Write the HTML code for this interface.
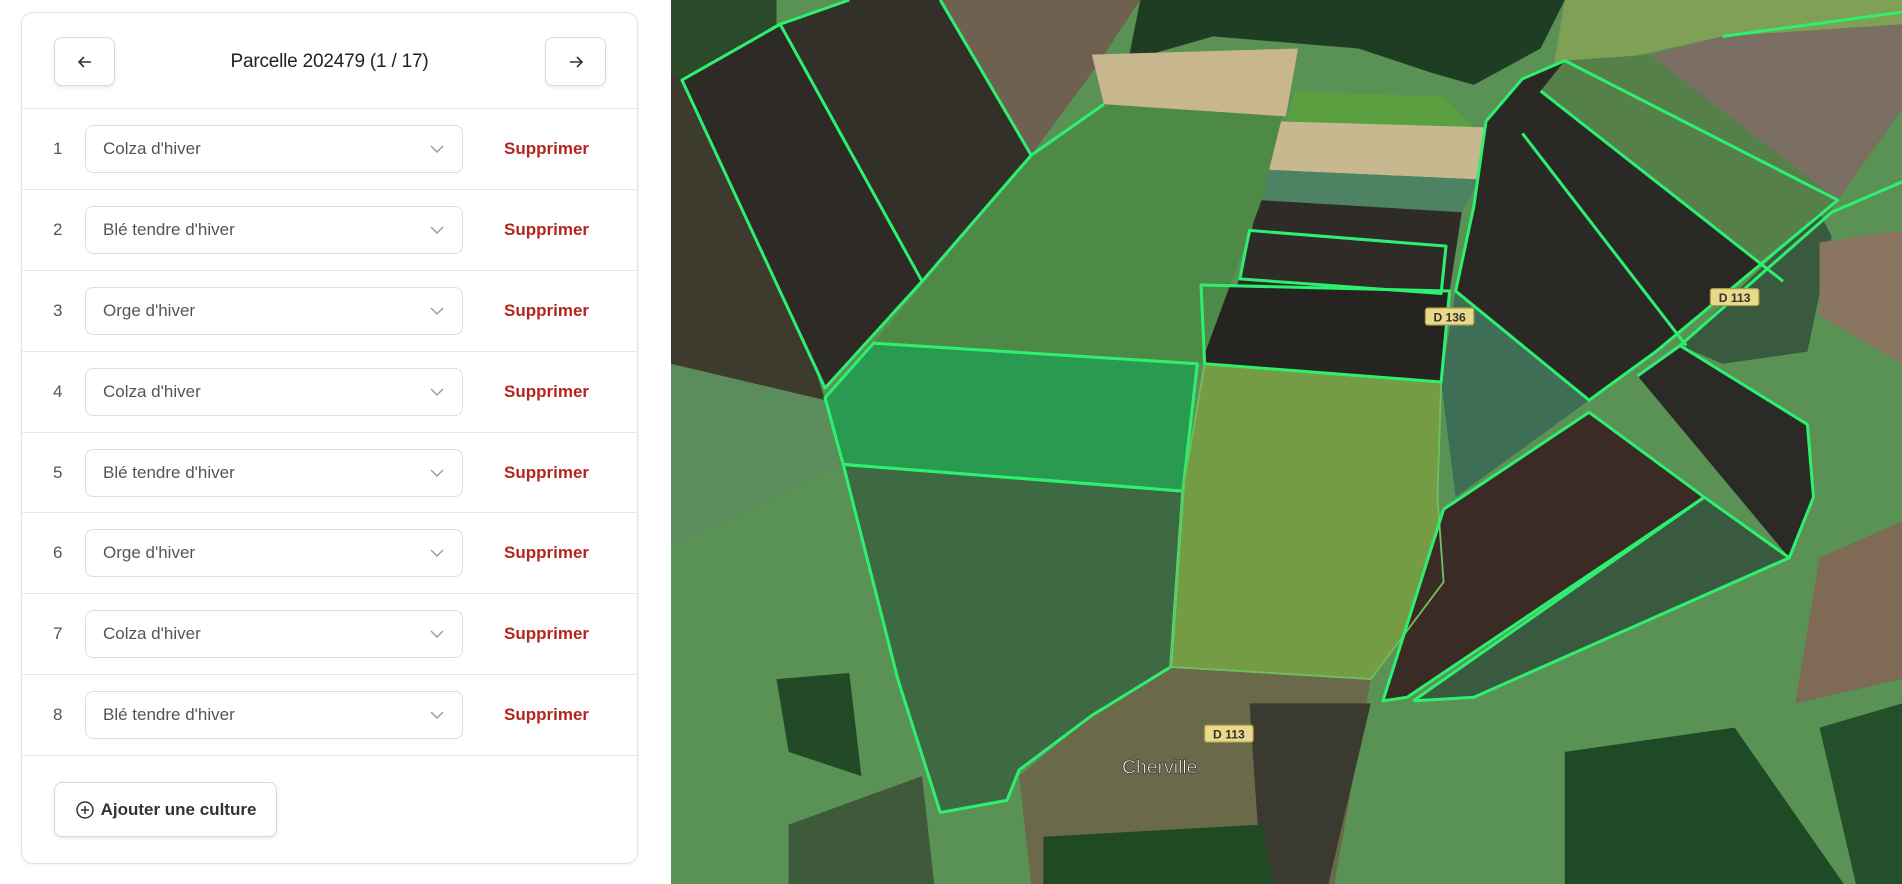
<!DOCTYPE html>
<html><head><meta charset="utf-8"><style>
*{box-sizing:border-box;margin:0;padding:0}
body{width:1902px;height:884px;overflow:hidden;background:#fff;font-family:"Liberation Sans",sans-serif;position:relative}
.card{position:absolute;left:21px;top:12px;width:617px;height:852px;border:1px solid #e3e3e3;border-radius:12px;background:#fff;box-shadow:0 1px 3px rgba(0,0,0,.06)}
.btn{position:absolute;border:1px solid #d9d9d9;border-radius:8px;background:#fff;box-shadow:0 2px 3px rgba(0,0,0,.08);display:flex;align-items:center;justify-content:center;color:#333}
.title{position:absolute;left:0;width:100%;top:38px;text-align:center;font-size:19px;color:#222;letter-spacing:-.2px}
.row{position:absolute;left:0;width:615px;height:81px;border-top:1px solid #e6e6e6}
.num{position:absolute;left:31px;top:30px;font-size:17px;color:#555}
.sel{position:absolute;left:63px;top:16px;width:378px;height:48px;border:1px solid #dedede;border-radius:8px;font-size:17px;color:#555;padding:13px 0 0 17px}
.sel svg{position:absolute;right:18px;top:18px}
.del{position:absolute;left:482px;top:30px;font-size:17px;font-weight:bold;color:#b3261e}
.map{position:absolute;left:671px;top:0;width:1231px;height:884px;background:#558a52}
</style></head><body>
<div class="card">
 <div class="btn" style="left:32px;top:24px;width:61px;height:49px"><svg width="18" height="18" viewBox="0 0 18 18" fill="none" stroke="#333" stroke-width="1.6"><path d="M15 9H3M8 4L3 9l5 5"/></svg></div>
 <div class="title">Parcelle 202479 (1 / 17)</div>
 <div class="btn" style="left:523px;top:24px;width:61px;height:49px"><svg width="18" height="18" viewBox="0 0 18 18" fill="none" stroke="#333" stroke-width="1.6"><path d="M3 9h12M10 4l5 5-5 5"/></svg></div>
 <div class="row" style="top:95px"><span class="num">1</span><div class="sel">Colza d'hiver<svg width="14" height="10" viewBox="0 0 14 10" fill="none" stroke="#999" stroke-width="1.4"><path d="M1 2l6 6 6-6"/></svg></div><span class="del">Supprimer</span></div>
 <div class="row" style="top:176px"><span class="num">2</span><div class="sel">Blé tendre d'hiver<svg width="14" height="10" viewBox="0 0 14 10" fill="none" stroke="#999" stroke-width="1.4"><path d="M1 2l6 6 6-6"/></svg></div><span class="del">Supprimer</span></div>
 <div class="row" style="top:257px"><span class="num">3</span><div class="sel">Orge d'hiver<svg width="14" height="10" viewBox="0 0 14 10" fill="none" stroke="#999" stroke-width="1.4"><path d="M1 2l6 6 6-6"/></svg></div><span class="del">Supprimer</span></div>
 <div class="row" style="top:338px"><span class="num">4</span><div class="sel">Colza d'hiver<svg width="14" height="10" viewBox="0 0 14 10" fill="none" stroke="#999" stroke-width="1.4"><path d="M1 2l6 6 6-6"/></svg></div><span class="del">Supprimer</span></div>
 <div class="row" style="top:419px"><span class="num">5</span><div class="sel">Blé tendre d'hiver<svg width="14" height="10" viewBox="0 0 14 10" fill="none" stroke="#999" stroke-width="1.4"><path d="M1 2l6 6 6-6"/></svg></div><span class="del">Supprimer</span></div>
 <div class="row" style="top:499px"><span class="num">6</span><div class="sel">Orge d'hiver<svg width="14" height="10" viewBox="0 0 14 10" fill="none" stroke="#999" stroke-width="1.4"><path d="M1 2l6 6 6-6"/></svg></div><span class="del">Supprimer</span></div>
 <div class="row" style="top:580px"><span class="num">7</span><div class="sel">Colza d'hiver<svg width="14" height="10" viewBox="0 0 14 10" fill="none" stroke="#999" stroke-width="1.4"><path d="M1 2l6 6 6-6"/></svg></div><span class="del">Supprimer</span></div>
 <div class="row" style="top:661px"><span class="num">8</span><div class="sel">Blé tendre d'hiver<svg width="14" height="10" viewBox="0 0 14 10" fill="none" stroke="#999" stroke-width="1.4"><path d="M1 2l6 6 6-6"/></svg></div><span class="del">Supprimer</span></div>
 <div class="row" style="top:742px;border-top:1px solid #e6e6e6;height:1px"></div>
 <div class="btn" style="left:32px;top:769px;width:223px;height:55px;font-size:17px;font-weight:bold;color:#333;gap:6px"><svg width="20" height="20" viewBox="0 0 20 20" fill="none" stroke="#333" stroke-width="1.5"><circle cx="10" cy="10" r="8"/><path d="M10 6v8M6 10h8"/></svg>Ajouter une culture</div>
</div>
<svg class="map" viewBox="553 0 1015 729" preserveAspectRatio="none">
 <rect x="553" y="0" width="1015" height="729" fill="#5a9154"/>
 <polygon points="553,60 600,70 680,330 640,330 553,300" fill="#3d3a2e"/>
 <polygon points="553,300 680,330 695,383 553,450" fill="#5a8c5c"/>
 <polygon points="940,0 1290,0 1270,40 1215,70 1180,60 1120,40 1000,30 930,50" fill="#1f3d22"/>
 <polygon points="1290,0 1568,0 1568,20 1420,30 1330,50 1280,60" fill="#7ea155"/>
 <polygon points="1420,30 1568,20 1568,90 1515,165 1360,45" fill="#7a6f62"/>
 <polygon points="553,0 640,0 640,20 562,66 553,60" fill="#2a4a2a"/>
 <polygon points="775,0 940,0 900,60 850,128" fill="#6e6150"/>
 <polygon points="900,45 1070,40 1060,96 910,86" fill="#c7b68e"/>
 <polygon points="1068,75 1190,80 1215,105 1060,100" fill="#5aa040"/>
 <polygon points="1050,100 1225,105 1220,148 1045,140" fill="#c8b890"/>
 <polygon points="1045,140 1220,148 1205,175 1040,165" fill="#4d8262"/>
 <polygon points="1038,165 1205,175 1195,240 1020,235" fill="#2f2b26"/>
 <polygon points="990,235 1195,240 1188,315 993,300" fill="#252420"/>
 <polygon points="850,128 910,86 1057,96 1040,165 990,300 720,283" fill="#4d8a48"/>
 <polygon points="562,66 643,20 760,232 680,320" fill="#2e2a26"/>
 <polygon points="643,20 700,0 775,0 850,128 760,232" fill="#33302a"/>
 <polygon points="720,283 987,300 975,405 695,383 680,328" fill="#2a9a50"/>
 <polygon points="695,383 975,405 965,550 900,590 840,635 830,660 775,670 740,560" fill="#3e6a43"/>
 <polygon points="993,300 1188,315 1185,410 1190,480 1130,560 965,550 975,405" fill="#739c45"/>
 <polygon points="1225,100 1255,65 1290,50 1515,165 1365,290 1310,330 1200,240 1215,170" fill="#2b2925"/>
 <polygon points="1290,50 1360,45 1515,165 1470,232 1270,75" fill="#55804a"/>
 <polygon points="1200,240 1310,330 1200,410 1188,315" fill="#3e6e55"/>
 <polygon points="1500,175 1510,195 1490,290 1420,300 1385,285" fill="#3a5a40"/>
 <polygon points="1190,420 1310,340 1405,410 1160,575 1140,578" fill="#3a2c25"/>
 <polygon points="1405,410 1475,460 1215,575 1165,578" fill="#3a5a40"/>
 <polygon points="1350,310 1385,285 1490,350 1495,410 1475,460" fill="#2b2a26"/>
 <polygon points="1500,200 1568,190 1568,300 1500,260" fill="#8a7560"/>
 <polygon points="1500,460 1568,430 1568,560 1480,580" fill="#7e6a55"/>
 <polygon points="840,640 900,590 965,550 1130,560 1100,729 850,729" fill="#6a6a4a"/>
 <polygon points="1030,580 1130,580 1095,729 1040,729" fill="#3a3a30"/>
 <polygon points="1290,620 1430,600 1520,729 1290,729" fill="#1e4a25"/>
 <polygon points="1500,600 1568,580 1568,729 1530,729" fill="#23502a"/>
 <polygon points="860,690 1040,680 1050,729 860,729" fill="#1f4a24"/>
 <polygon points="640,560 700,555 710,640 650,620" fill="#234a26"/>
 <polygon points="650,680 760,640 770,729 650,729" fill="#3e5a3a"/>
 <g fill="none" stroke="#2ef070" stroke-width="2.5" stroke-linejoin="round">
  <polygon points="562,66 643,20 760,232 680,320"/>
  <polyline points="643,20 700,0"/>
  <polyline points="775,0 850,128 760,232"/>
  <polyline points="850,128 910,86"/>
  <polygon points="720,283 987,300 975,405 695,383 680,328"/>
  <polygon points="695,383 975,405 965,550 900,590 840,635 830,660 775,670 740,560"/>
  <polygon points="993,300 1188,315 1185,410 1190,480 1130,560 965,550 975,405" stroke-width="1.5" stroke="#6fbf60"/>
  <polygon points="990,235 1195,240 1188,315 993,300"/>
  <polygon points="1030,190 1192,203 1188,242 1022,230"/>
  <polyline points="1225,100 1255,65 1290,50 1515,165 1365,290 1310,330 1200,240 1215,170 1225,100"/>
  <polyline points="1270,75 1470,232"/>
  <polyline points="1255,110 1390,285"/>
  <polyline points="1190,420 1310,340 1405,410 1160,575 1140,578 1190,420"/>
  <polyline points="1165,578 1405,410 1475,460 1215,575 1165,578"/>
  <polyline points="1350,310 1385,285 1490,350 1495,410 1475,460"/>
  <polyline points="1385,285 1510,175 1568,150"/>
  <polyline points="1420,30 1568,10"/>
 </g>
 <g font-family="Liberation Sans" font-weight="bold" font-size="10" text-anchor="middle">
  <rect x="1175" y="254" width="40" height="14" rx="2" fill="#e9d98a" stroke="#a89a50"/><text x="1195" y="265" fill="#333">D 136</text>
  <rect x="1410" y="238" width="40" height="14" rx="2" fill="#e9d98a" stroke="#a89a50"/><text x="1430" y="249" fill="#333">D 113</text>
  <rect x="993" y="598" width="40" height="14" rx="2" fill="#e9d98a" stroke="#a89a50"/><text x="1013" y="609" fill="#333">D 113</text>
  <text x="956" y="638" font-size="16" font-weight="normal" fill="#fff" stroke="#333" stroke-width=".6">Cherville</text>
 </g>
</svg>
</body></html>
